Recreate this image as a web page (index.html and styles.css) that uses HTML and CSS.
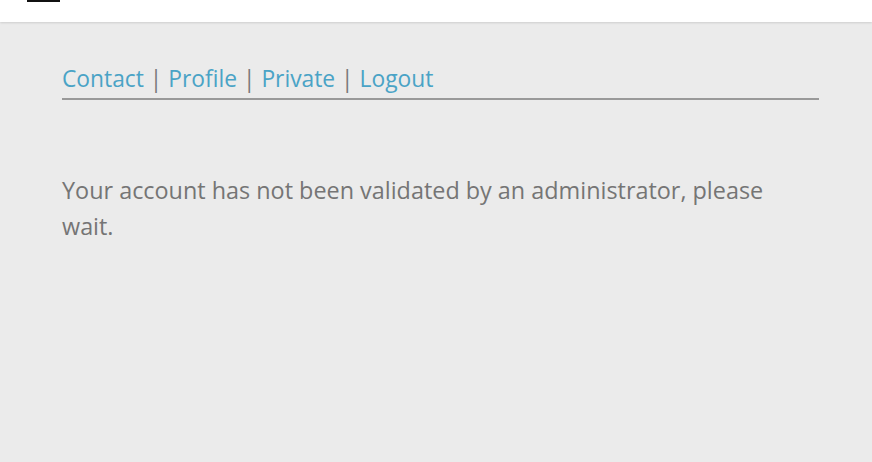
FILE: index.html
```html
<!DOCTYPE html>
<html>
<head>
<meta charset="utf-8">
<link rel="stylesheet" href="styles.css">
</head>
<body>
<header class="topbar">
  <div class="burger"><span></span></div>
</header>
<main class="content">
  <nav class="menu">
    <a href="#">Contact</a> <span class="sep">|</span> <a href="#">Profile</a> <span class="sep">|</span> <a href="#">Private</a> <span class="sep">|</span> <a href="#">Logout</a>
  </nav>
  <p class="notice">Your account has not been validated by an administrator, please wait.</p>
</main>
</body>
</html>
```
FILE: styles.css
```css
html, body {
  margin: 0;
  padding: 0;
}
body {
  background: #ebebeb;
  font-family: "Open Sans", "Noto Sans", sans-serif;
  height: 462px;
  overflow: hidden;
}
.topbar {
  background: #fff;
  height: 22px;
  box-shadow: 0 1px 2px rgba(0,0,0,0.12);
  padding-left: 27px;
}
.burger span {
  display: block;
  width: 33px;
  height: 2px;
  background: #111;
}
.content {
  margin: 0 53px 0 62px;
}
.menu {
  padding-top: 37px;
  font-size: 22.8px;
  line-height: 39px;
  border-bottom: 2px solid #999;
  color: #7a7a7a;
}
.menu a {
  color: #4aa3c6;
  text-decoration: none;
}
.sep {
  color: #7a7a7a;
}
.notice {
  margin: 72px 0 0;
  font-size: 23.4px;
  line-height: 36px;
  color: #757575;
}
```
